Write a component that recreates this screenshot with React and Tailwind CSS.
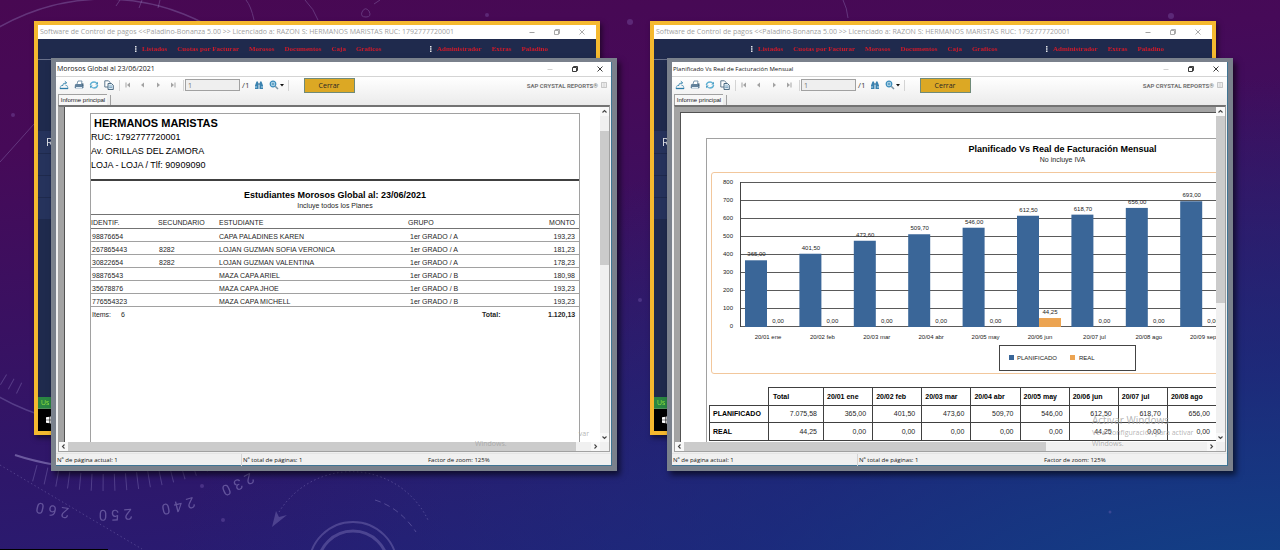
import { useState } from 'react';

const debtors = [
  { id: '98876654', code: '', name: 'CAPA PALADINES KAREN', group: '1er GRADO / A', amount: '193,23' },
  { id: '267865443', code: '8282', name: 'LOJAN GUZMAN SOFIA VERONICA', group: '1er GRADO / A', amount: '181,23' },
  { id: '30822654', code: '8282', name: 'LOJAN GUZMAN VALENTINA', group: '1er GRADO / A', amount: '178,23' },
  { id: '98876543', code: '', name: 'MAZA CAPA ARIEL', group: '1er GRADO / B', amount: '180,98' },
  { id: '35678876', code: '', name: 'MAZA CAPA JHOE', group: '1er GRADO / B', amount: '193,23' },
  { id: '776554323', code: '', name: 'MAZA CAPA MICHELL', group: '1er GRADO / B', amount: '193,23' },
];

const months = [
  { label: '20/01 ene', planned: 365, real: 0 },
  { label: '20/02 feb', planned: 401.5, real: 0 },
  { label: '20/03 mar', planned: 473.6, real: 0 },
  { label: '20/04 abr', planned: 509.7, real: 0 },
  { label: '20/05 may', planned: 546, real: 0 },
  { label: '20/06 jun', planned: 612.5, real: 44.25 },
  { label: '20/07 jul', planned: 618.7, real: 0 },
  { label: '20/08 ago', planned: 656, real: 0 },
  { label: '20/09 sep', planned: 693, real: 0 },
];

const money = (n) => n.toFixed(2).replace('.', ',');

const Wallpaper = () => {
  const ticks = Array.from({ length: 17 }, (_, i) => -24 + i * 2.44);
  const sideTicks = Array.from({ length: 12 }, (_, i) => 26 + i * 2.6);
  const numbers = [
    { text: '260', angle: 10 },
    { text: '250', angle: -2 },
    { text: '240', angle: -14 },
    { text: '230', angle: -26 },
  ];

  return (
    <svg className="absolute inset-0 h-full w-full" viewBox="0 0 1280 550" preserveAspectRatio="xMidYMid slice" fill="none" stroke="#a79bd6" aria-hidden="true">
      <circle cx="105" cy="212" r="213" strokeWidth="1.5" opacity=".3" />
      <path d="M15 455 Q33 461 56 465" strokeWidth="2" opacity=".5" />
      <g opacity=".3">
        {ticks.map((a) => (
          <path key={a} d="M105 474 V491" transform={`rotate(${a} 105 212)`} />
        ))}
        {sideTicks.map((a) => (
          <path key={a} d="M105 402 V414" transform={`rotate(${a} 105 212)`} />
        ))}
      </g>
      <g fill="#a79bd6" stroke="none" opacity=".45" fontFamily="Roboto, sans-serif" fontSize="15">
        {numbers.map((n) =>
          n.text.split('').map((digit, i) => (
            <text key={n.text + i} x="105" y="-86" textAnchor="middle" transform={`rotate(${n.angle + 180 + (i - 1) * 2.4} 105 212)`}>
              {digit}
            </text>
          ))
        )}
      </g>
      <path d="M0 465 L142 549" strokeDasharray="1.5 2.5" opacity=".3" />
      <path d="M279 512 A85 85 0 0 1 428 520" strokeDasharray="1.5 2.5" opacity=".35" />
      <path d="M375 500 Q400 508 416 532" strokeDasharray="6 4" opacity=".35" />
      <path d="M276 511 L272 527 L287 515 L279 517 Z" fill="#a79bd6" stroke="none" opacity=".3" />
      <circle cx="353" cy="566" r="44" strokeWidth="2" opacity=".3" />
      <circle cx="353" cy="566" r="35" strokeWidth="3" opacity=".3" />
      <g opacity=".3">
        <path d="M246 0 Q251 6 254 20" />
        <path d="M305 0 Q314 9 318 20" />
        <path d="M120 0 L116 6 M142 0 L139 8 M160 0 L158 8" />
        <path d="M362 12 q3 -6 7 -1 q3 6 -3 6 q-6 0 -4 -5 M374 4 l6 -4" />
        <path d="M843 0 Q847 8 848 18" />
        <path d="M0 162 L34 124" />
      </g>
      <g fill="#8f6fc4" stroke="none" opacity=".3">
        <circle cx="13" cy="115" r="2" />
        <circle cx="487" cy="15" r="2" />
        <circle cx="1171" cy="16" r="3" />
        <circle cx="223" cy="520" r="2" />
        <circle cx="202" cy="486" r="2" />
        <circle cx="630" cy="22" r="3" />
        <circle cx="1110" cy="512" r="1.5" />
        <circle cx="640" cy="300" r="2" />
      </g>
      <path d="M0 549.5 H108" stroke="#000" />
    </svg>
  );
};

const WindowButtons = ({ faded }) => (
  <div className={`flex items-center gap-[17px] ${faded ? 'text-neutral-400' : 'text-neutral-800'}`}>
    <button type="button" aria-label="Minimizar" className="h-2 w-2">
      <svg viewBox="0 0 8 8" className={`h-2 w-2 ${faded ? '' : 'opacity-20'}`} stroke="currentColor" fill="none">
        <path d="M1.500 4.500 H6.500" />
      </svg>
    </button>
    <button type="button" aria-label="Restaurar" className="h-2 w-2">
      <svg viewBox="0 0 8 8" className="h-2 w-2" stroke="currentColor" fill="none" strokeWidth=".9">
        <path d="M1.500 2.500 H5.500 V6.500 H1.500 Z M2.500 2.500 V1.500 H6.500 V5.500 H5.500" />
      </svg>
    </button>
    <button type="button" aria-label="Cerrar ventana" className="h-2 w-2">
      <svg viewBox="0 0 8 8" className="h-2 w-2" stroke="currentColor" fill="none" strokeWidth=".9">
        <path d="M1.500 1.500 L6.500 6.500 M6.500 1.500 L1.500 6.500" />
      </svg>
    </button>
  </div>
);

const Grip = () => (
  <svg viewBox="0 0 2 6" className="h-[6px] w-[2px]" fill="#e5e7eb">
    <path d="M0 0h1.500v1.500h-1.500z M0 2.200h1.500v1.500h-1.500z M0 4.400h1.500v1.500h-1.500z" />
  </svg>
);

const MenuGroup = ({ items }) => (
  <div className="flex items-center gap-[10px]">
    <span className="-mr-[5px]">
      <Grip />
    </span>
    {items.map((item) => (
      <button key={item} type="button">
        {item}
      </button>
    ))}
  </div>
);

const MainWindow = () => (
  <div className="absolute top-0 right-[17px] bottom-9 left-0 flex flex-col border-4 border-[#f5b92f] bg-[#1f2a4d] shadow-[2px_3px_5px_rgba(0,0,0,0.5)]">
    <div className="flex h-[14px] shrink-0 items-center justify-between bg-white pr-[10px] pl-[2px] font-['Open_Sans',sans-serif] text-[7px] leading-[14px] text-neutral-400">
      <span className="whitespace-pre">{'Software de Control de pagos <<Paladino-Bonanza 5.00 >> Licenciado a: RAZON S: HERMANOS MARISTAS RUC: 1792777720001'}</span>
      <WindowButtons faded />
    </div>
    <nav className="flex h-[21px] shrink-0 items-center justify-between border-b border-[#68708a] pr-[48px] pl-[97px] font-['Liberation_Serif',serif] text-[7px] font-bold text-[#d01a2a]">
      <MenuGroup items={['Listados', 'Cuotas por Facturar', 'Morosos', 'Documentos', 'Caja', 'Graficos']} />
      <MenuGroup items={['Administrador', 'Extras', 'Paladino']} />
    </nav>
    <div className="flex-1 pt-[71px]">
      <div className="h-[22px] bg-[#26335c] pl-2 font-['Open_Sans',sans-serif] text-[11px] leading-[22px] text-gray-200">R</div>
      <div className="mt-px h-[21px] bg-[#26335c]" />
      <div className="mt-px h-[21px] bg-[#26335c]" />
      <div className="mt-px h-[21px] bg-[#26335c]" />
    </div>
    <div className="h-3 border-b border-[#55905f] bg-[#2a8642] pl-[3px] font-['Open_Sans',sans-serif] text-[7px] leading-3 text-[#8fe03c]">Us</div>
    <div className="flex h-[22px] items-center bg-black pl-2">
      <svg viewBox="0 0 8 8" className="h-2 w-2" fill="#fff">
        <path d="M0 1.200 L3.500 .7 V3.700 H0 Z M4.200 .6 L8 0 V3.700 H4.200 Z M0 4.300 H3.500 V7.300 L0 6.800 Z M4.200 4.300 H8 V8 L4.200 7.400 Z" />
      </svg>
    </div>
  </div>
);

const ToolButton = ({ label, children }) => (
  <button type="button" aria-label={label} className="h-[10px] w-[10px] shrink-0">
    <svg viewBox="0 0 10 10" className="h-[10px] w-[10px]" fill="none">
      {children}
    </svg>
  </button>
);

const Divider = () => <span className="h-[11px] w-px shrink-0 bg-neutral-300" />;

const Toolbar = () => {
  const [page, setPage] = useState('1');

  return (
    <div className="flex h-4 items-center pr-1 pl-[3px] font-['Open_Sans',sans-serif]">
      <div className="flex items-center gap-[5px]">
        <ToolButton label="Exportar">
          <path d="M1 8 L2.200 5.500 H4 M6.500 5.500 H8 L9 8" stroke="#5b9bbd" strokeWidth=".8" />
          <path d="M3.500 6 Q3.500 3 7 2.800 M5.800 1.200 L7.800 2.800 L5.800 4.300" stroke="#3a86ad" strokeWidth=".9" />
          <path d="M.8 8.500 H9.200" stroke="#2c7ba8" strokeWidth="1.300" />
        </ToolButton>
        <ToolButton label="Imprimir">
          <path d="M3 4 L4 1 H8 L7.500 4" stroke="#5b7f9b" fill="#fff" strokeWidth=".8" />
          <path d="M1 4.500 L2 4 H8.500 L9.500 4.500 V7.500 L8.500 8.500 H1.500 L.7 7.500 Z" fill="#63829c" />
          <path d="M2 7 H8 V8.500 H2 Z" fill="#e2edf5" />
          <path d="M8.800 3 V6" stroke="#35566e" strokeWidth=".8" />
        </ToolButton>
        <ToolButton label="Actualizar">
          <path d="M1.300 5 Q2 2 5 2 Q7 2 8 3.500" stroke="#5fb0d3" strokeWidth="1.300" />
          <path d="M8.700 5 Q8 8 5 8 Q3 8 2 6.500" stroke="#5fb0d3" strokeWidth="1.300" />
          <path d="M9 1.800 V4.600 H6.200 Z M1 8.200 V5.400 H3.800 Z" fill="#4a9dc4" />
        </ToolButton>
        <ToolButton label="Copiar">
          <path d="M.8 .8 H4.500 L6 2.300 V7 H.8 Z" stroke="#4f6c84" fill="#fff" strokeWidth=".9" />
          <path d="M4 3.500 H7.500 L9.300 5.300 V9.500 H4 Z" stroke="#3f6079" fill="#dceaf3" strokeWidth=".9" />
          <path d="M5.200 6 H8 M5.200 7.500 H8" stroke="#5d8fb3" strokeWidth=".7" />
        </ToolButton>
      </div>
      <span className="w-[5px]" />
      <Divider />
      <div className="flex items-center gap-[5px] pr-[5px] pl-[3px]">
        <ToolButton label="Primera página">
          <path d="M3 2.500 V7.500" stroke="#a3a3a3" />
          <path d="M7 2.500 V7.500 L4 5 Z" fill="#a3a3a3" />
        </ToolButton>
        <ToolButton label="Página anterior">
          <path d="M6 2.500 V7.500 L3 5 Z" fill="#a3a3a3" />
        </ToolButton>
        <ToolButton label="Página siguiente">
          <path d="M4 2.500 V7.500 L7 5 Z" fill="#a3a3a3" />
        </ToolButton>
        <ToolButton label="Última página">
          <path d="M3 2.500 V7.500 L6 5 Z" fill="#a3a3a3" />
          <path d="M7 2.500 V7.500" stroke="#a3a3a3" />
        </ToolButton>
      </div>
      <Divider />
      <input
        aria-label="Número de página"
        value={page}
        onChange={(e) => setPage(e.target.value)}
        className="ml-px h-3 w-[55px] border border-neutral-400 bg-[#efefef] pl-[2px] text-[7px] leading-[10px] text-neutral-500"
      />
      <span className="ml-[2px] text-[8px] leading-3 text-neutral-700">/1</span>
      <div className="mr-px ml-1 flex items-center gap-[5px]">
        <ToolButton label="Buscar">
          <path d="M1 9 V5.500 L2.500 1.500 H4 L4.500 5 V9 Z M9 9 V5.500 L7.500 1.500 H6 L5.500 5 V9 Z" fill="#3a82b0" />
          <path d="M4 4 H6" stroke="#28648c" />
          <path d="M2 6 V8 M8 6 V8" stroke="#b8dcf0" />
        </ToolButton>
        <ToolButton label="Zoom">
          <circle cx="4" cy="4" r="2.800" stroke="#3a8cbc" strokeWidth="1.200" fill="#bfe0f2" />
          <path d="M2.500 4 H5.500 M4 2.500 V5.500" stroke="#2b78a5" strokeWidth=".7" />
          <path d="M6.200 6.200 L9 9" stroke="#7a94a5" strokeWidth="1.500" />
        </ToolButton>
      </div>
      <svg viewBox="0 0 4 3" className="mr-1 h-[3px] w-1" fill="#111">
        <path d="M0 0 H4 L2 2.500 Z" />
      </svg>
      <Divider />
      <button type="button" className="ml-[15px] h-[15px] w-[51px] border border-[#6f8a78] bg-[#dca824] text-center text-[7px] leading-[13px] text-neutral-800">
        Cerrar
      </button>
      <span className="ml-auto font-['Roboto',sans-serif] text-[6px] font-bold text-neutral-500">SAP CRYSTAL REPORTS®</span>
      <svg viewBox="0 0 6 6" className="ml-[3px] h-[6px] w-[6px]" fill="none" stroke="#b0b0b0">
        <path d="M.5 .5 H5.500 V5.500 H.5 Z M1.500 2 H4.500 M1.500 4 H4.500" strokeWidth=".7" />
      </svg>
    </div>
  );
};

const Arrow = ({ d }) => (
  <svg viewBox="0 0 9 9" className="h-[9px] w-[9px] shrink-0 bg-[#f8f8f8]" fill="none" stroke="#444" strokeWidth="1.100">
    <path d={d} />
  </svg>
);

const ReportWindow = ({ title, titleClass, thumbV, thumbH, children }) => (
  <section className="relative mt-[37px] ml-[17px] border-x-[5px] border-t-4 border-b-[5px] border-[#7a818c] shadow-[3px_4px_6px_rgba(0,0,0,0.6)]">
    <div className="border-r border-b border-[#3f7594] bg-[#f0f0f0]">
      <header className="flex h-[15px] items-center justify-between border-b border-neutral-300 bg-white pr-[7px] pl-px">
        <h2 className={`font-['Open_Sans',sans-serif] leading-[14px] text-neutral-900 ${titleClass}`}>{title}</h2>
        <WindowButtons />
      </header>
      <div className="bg-linear-to-b from-white to-[#ebebeb]">
        <Toolbar />
        <div className="flex h-3 items-end pl-[2px]">
          <button type="button" className="h-[11px] w-[49px] border-t border-l border-neutral-400 bg-[#f7f7f7] font-['Liberation_Sans',sans-serif] text-[6px] leading-[10px] text-neutral-900">
            <span className="block whitespace-nowrap">Informe principal</span>
          </button>
          <span className="ml-[3px] h-[10px] w-px bg-neutral-400" />
        </div>
      </div>
      <div className="mr-px ml-[2px] border border-t-2 border-neutral-400 border-t-neutral-500">
        <div className="flex h-[335px]">
          <div className="relative min-w-0 flex-1 overflow-hidden">{children}</div>
          <div className="flex w-[9px] shrink-0 flex-col bg-[#f0f0f0]">
            <Arrow d="M2.500 5.500 L4.500 3.500 L6.500 5.500" />
            <span className={`bg-[#cbcbcb] ${thumbV}`} />
            <span className="flex-1" />
            <Arrow d="M2.500 3.500 L4.500 5.500 L6.500 3.500" />
          </div>
        </div>
        <div className="flex h-[9px] bg-[#f0f0f0] pr-[9px]">
          <Arrow d="M5.500 2.500 L3.500 4.500 L5.500 6.500" />
          <span className={`bg-[#cbcbcb] ${thumbH}`} />
          <span className="flex-1" />
          <Arrow d="M3.500 2.500 L5.500 4.500 L3.500 6.500" />
        </div>
      </div>
      <footer className="mt-px grid h-3 grid-cols-3 border-t border-neutral-200 font-['Open_Sans',sans-serif] text-[6px] leading-3 text-neutral-900">
        <span className="pl-px">Nº de página actual: 1</span>
        <span className="border-l border-neutral-300 pl-px">Nº total de páginas: 1</span>
        <span className="pl-[2px]">Factor de zoom: 125%</span>
      </footer>
    </div>
  </section>
);

const DebtorsReport = () => (
  <div className="h-full border-l-[5px] border-[#a3a3a3] font-['Liberation_Sans',sans-serif] text-black">
    <div className="h-full border-l border-neutral-600 bg-white pt-[6px] pr-5 pl-[25px]">
      <div className="h-full border-x border-t border-neutral-400">
        <div className="h-[67px] border-b-2 border-neutral-700 pt-[2px]">
          <h1 className="pl-[3px] text-[11px] leading-[14px] font-bold">HERMANOS MARISTAS</h1>
          <p className="text-[9px] leading-[14px]">RUC: 1792777720001</p>
          <p className="text-[9px] leading-[14px]">Av. ORILLAS DEL ZAMORA</p>
          <p className="text-[9px] leading-[14px]">LOJA - LOJA / Tlf: 90909090</p>
        </div>
        <div className="pt-2 pb-[3px] text-center">
          <h3 className="text-[9px] leading-3 font-bold">Estudiantes Morosos Global al: 23/06/2021</h3>
          <p className="text-[7px] leading-[10px] text-neutral-800">Incluye todos los Planes</p>
        </div>
        <table className="w-full table-fixed border-collapse text-left text-[7px] leading-[9px] text-neutral-800">
          <colgroup>
            <col className="w-[67px]" />
            <col className="w-[61px]" />
            <col />
            <col className="w-[110px]" />
            <col className="w-[61px]" />
          </colgroup>
          <thead>
            <tr className="h-[14px] border-y border-neutral-500">
              <th className="p-0 pt-[2px] font-normal">IDENTIF.</th>
              <th className="p-0 pt-[2px] font-normal">SECUNDARIO</th>
              <th className="p-0 pt-[2px] font-normal">ESTUDIANTE</th>
              <th className="p-0 pt-[2px] font-normal">GRUPO</th>
              <th className="p-0 pt-[2px] pr-1 text-right font-normal">MONTO</th>
            </tr>
          </thead>
          <tbody>
            {debtors.map((d) => (
              <tr key={d.id} className="h-[13px] border-b border-neutral-400">
                <td className="p-0 pt-[3px] pl-px">{d.id}</td>
                <td className="p-0 pt-[3px] pl-px">{d.code}</td>
                <td className="p-0 pt-[3px]">{d.name}</td>
                <td className="p-0 pt-[3px] pl-[2px]">{d.group}</td>
                <td className="p-0 pt-[3px] pr-1 text-right">{d.amount}</td>
              </tr>
            ))}
          </tbody>
        </table>
        <div className="flex pt-[2px] pr-1 text-[7px] leading-3 text-neutral-800">
          <span className="pl-px">Items:</span>
          <span className="pl-[10px]">6</span>
          <span className="ml-auto w-[66px] font-bold">Total:</span>
          <span className="w-[27px] text-right font-bold">1.120,13</span>
        </div>
      </div>
    </div>
  </div>
);

const BillingChart = () => {
  const base = 153;
  const step = 54.4;

  return (
    <svg width="702" height="200" viewBox="0 0 702 200" className="block font-['Liberation_Sans',sans-serif] text-[6px]" fill="#222">
      {[0, 100, 200, 300, 400, 500, 600, 700, 800].map((v) => (
        <g key={v}>
          <path d={`M29 ${base - v * 0.18 + 0.5} H684`} stroke="#5a5a5a" />
          <text x="21" y={base - v * 0.18 + 2} textAnchor="end">{v}</text>
        </g>
      ))}
      <path d="M28.500 9 V154" stroke="#444" />
      {months.map((m, i) => {
        const x = 33 + i * step;
        const top = base - m.planned * 0.18;
        const realTop = base - m.real * 0.18;
        return (
          <g key={m.label}>
            <rect x={x} y={top} width="22" height={base - top + 1} fill="#3a6698" />
            {m.real > 0 && <rect x={x + 22} y={realTop} width="22" height={base - realTop + 1} fill="#eca452" />}
            <text x={x + 11.5} y={top - 4} textAnchor="middle">{money(m.planned)}</text>
            <text x={x + 33} y={realTop - (m.real > 0 ? 4 : 3)} textAnchor="middle">{money(m.real)}</text>
            <text x={x + 23} y="166" textAnchor="middle">{m.label}</text>
          </g>
        );
      })}
      <rect x="287.500" y="172.500" width="136" height="25" fill="#fff" stroke="#444" />
      <rect x="297" y="182" width="5" height="5" fill="#3a6698" />
      <text x="305" y="187">PLANIFICADO</text>
      <rect x="358" y="182" width="5" height="5" fill="#eca452" />
      <text x="367" y="187">REAL</text>
    </svg>
  );
};

const BillingReport = () => (
  <div className="h-full border-t-[5px] border-l-[5px] border-[#a3a3a3] font-['Liberation_Sans',sans-serif] text-black">
    <div className="h-full border-t border-l border-neutral-600 bg-white pt-[25px] pl-[25px]">
      <div className="h-full w-[712px] border-t border-l border-neutral-400">
        <div className="pt-1 text-center">
          <h1 className="text-[9px] leading-3 font-bold">Planificado Vs Real de Facturación Mensual</h1>
          <p className="text-[7px] leading-[9px] text-neutral-800">No incluye IVA</p>
        </div>
        <div className="mt-2 mr-1 ml-1 rounded-[3px] border border-[#f2c79c]">
          <BillingChart />
        </div>
        <table className="mt-[13px] ml-[2px] w-[508px] table-fixed border-collapse text-[7px] leading-3">
          <colgroup>
            <col className="w-[59px]" />
            <col className="w-[55px]" />
          </colgroup>
          <thead>
            <tr className="h-[18px] text-left">
              <td className="p-0" />
              <th className="border border-neutral-700 p-0 pl-1">Total</th>
              {months.slice(0, 8).map((m) => (
                <th key={m.label} className="border border-neutral-700 p-0 pl-[3px] whitespace-nowrap">{m.label}</th>
              ))}
            </tr>
          </thead>
          <tbody>
            <tr className="h-[17px] text-right text-neutral-800">
              <th className="border border-neutral-700 p-0 pl-[3px] text-left text-black">PLANIFICADO</th>
              <td className="border border-neutral-700 p-0 pr-[6px]">7.075,58</td>
              {months.slice(0, 8).map((m) => (
                <td key={m.label} className="border border-neutral-700 p-0 pr-[6px]">{money(m.planned)}</td>
              ))}
            </tr>
            <tr className="h-[18px] text-right text-neutral-800">
              <th className="border border-neutral-700 p-0 pl-[3px] text-left text-black">REAL</th>
              <td className="border border-neutral-700 p-0 pr-[6px]">44,25</td>
              {months.slice(0, 8).map((m) => (
                <td key={m.label} className="border border-neutral-700 p-0 pr-[6px]">{money(m.real)}</td>
              ))}
            </tr>
          </tbody>
        </table>
      </div>
    </div>
  </div>
);

const App = () => (
  <main className="relative min-h-screen overflow-hidden bg-[radial-gradient(ellipse_at_100%_115%,#0f4688_0%,rgba(20,52,130,0.6)_30%,transparent_62%),linear-gradient(174deg,#480852_0%,#460a58_22%,#2e176a_70%,#241f78_100%)]">
    <Wallpaper />
    <div className="relative grid grid-cols-2 gap-[33px] pt-[21px] pr-[47px] pl-[34px]">
      <div className="relative min-w-0">
        <MainWindow />
        <ReportWindow title="Morosos Global al 23/06/2021" titleClass="text-[7px]" thumbV="mt-[15px] h-[134px]" thumbH="w-[508px]">
          <DebtorsReport />
        </ReportWindow>
        <div className="absolute right-[28px] bottom-[22px] font-['Open_Sans',sans-serif] text-[7px] leading-[10px] text-neutral-400/80">
          <p className="text-right">var</p>
          <p className="w-[114px]">Windows.</p>
        </div>
      </div>
      <div className="relative min-w-0">
        <MainWindow />
        <ReportWindow title="Planificado Vs Real de Facturación Mensual" titleClass="text-[6px]" thumbV="h-[187px]" thumbH="w-[362px]">
          <BillingReport />
        </ReportWindow>
        <div className="absolute right-[26px] bottom-[22px] w-[115px] font-['Open_Sans',sans-serif] text-[7px] leading-[11px] text-neutral-400/80">
          <p className="text-[10px] leading-[14px]">Activar Windows</p>
          <p className="whitespace-nowrap">Ve a Configuración para activar</p>
          <p>Windows.</p>
        </div>
      </div>
    </div>
  </main>
);

export default App;
